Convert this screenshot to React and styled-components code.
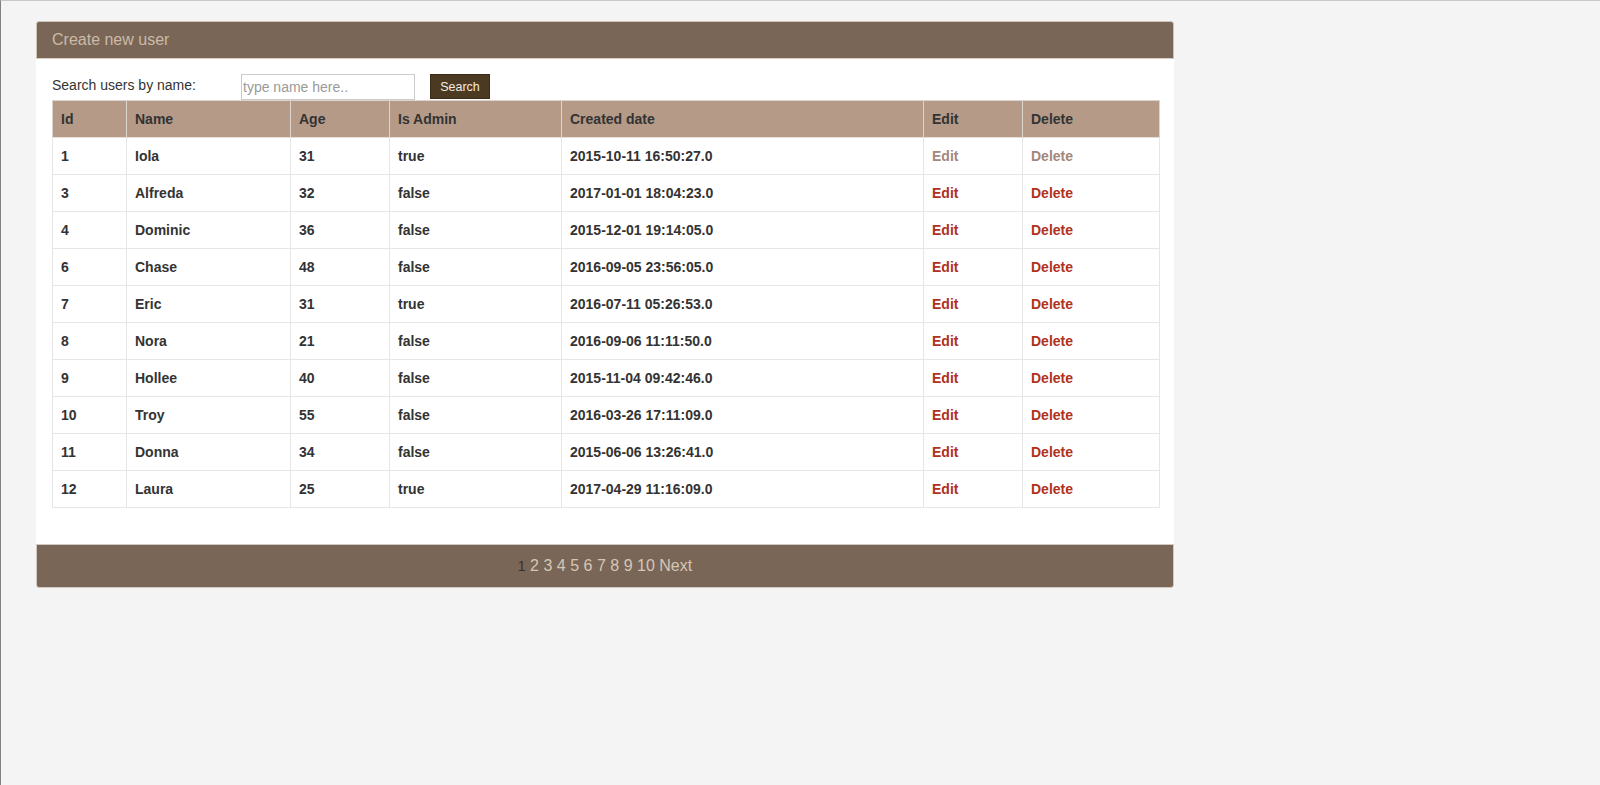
import React from "react";
import styled, { createGlobalStyle } from "styled-components";

const GlobalStyle = createGlobalStyle`
  html, body {
    margin: 0;
    padding: 0;
    background: #f4f4f4;
  }
  body {
    font-family: "Liberation Sans", Arial, sans-serif;
    font-size: 14px;
    color: #333;
  }
`;

const Page = styled.div`
  box-sizing: border-box;
  min-height: 785px;
  border-top: 1px solid #c9c9c9;
  border-left: 1px solid #808080;
  padding: 20px 0 0 35px;
`;

const Panel = styled.div`
  width: 1138px;
  background: #fff;
`;

const PanelHeader = styled.div`
  box-sizing: border-box;
  height: 38px;
  padding: 0 15px;
  display: flex;
  align-items: center;
  background: #7a6656;
  border: 1px solid #cfc4ba;
  border-bottom-color: #d6ccc2;
  border-radius: 3px 3px 0 0;
  color: #cbbba8;
  font-size: 16px;
`;

const PanelBody = styled.div`
  padding: 15px 15px 36px 16px;
`;

const SearchRow = styled.div`
  display: flex;
  align-items: flex-start;
`;

const SearchLabel = styled.label`
  width: 189px;
  padding-top: 1px;
  line-height: 20px;
  font-size: 14px;
  color: #333;
`;

const SearchInput = styled.input`
  box-sizing: border-box;
  width: 174px;
  height: 26px;
  margin: 0;
  padding: 0 1px;
  border: 1px solid #cccccc;
  font-family: "Liberation Sans", Arial, sans-serif;
  font-size: 14px;
  color: #333;
  outline: none;

  &::placeholder {
    color: #9a9a9a;
  }
`;

const SearchButton = styled.button`
  box-sizing: border-box;
  width: 60px;
  height: 25px;
  margin-left: 15px;
  padding: 0;
  background: #4c3921;
  border: 1px solid #3a2b17;
  color: #f3ece3;
  font-family: "Liberation Sans", Arial, sans-serif;
  font-size: 12.5px;
  cursor: pointer;
`;

const Table = styled.table`
  width: 1107px;
  table-layout: fixed;
  border-collapse: collapse;
  border: 1px solid #e3e3e3;
`;

const HeadCell = styled.th`
  padding: 8px;
  line-height: 20px;
  text-align: left;
  font-size: 14px;
  font-weight: bold;
  color: #333;
  background: #b49a87;
  border: 1px solid #dcd4cd;
  border-bottom: 1px solid #e6e0da;
`;

const Cell = styled.td`
  padding: 8px;
  line-height: 20px;
  font-size: 14px;
  font-weight: bold;
  color: #333;
  border: 1px solid #e6e6e6;
`;

const ActionLink = styled.a`
  color: ${(p) => (p.$muted ? "#a3877b" : "#b0311c")};
  text-decoration: none;
  cursor: pointer;
`;

const PanelFooter = styled.div`
  box-sizing: border-box;
  height: 44px;
  padding-top: 10px;
  background: #7a6656;
  border: 1px solid #d3c9c0;
  border-radius: 0 0 3px 3px;
  text-align: center;
  line-height: 22px;
  font-size: 16px;
`;

const PageLink = styled.a`
  color: ${(p) => (p.$current ? "#3b3129" : "#d4c6b6")};
  font-size: ${(p) => (p.$current ? "14px" : "16px")};
  text-decoration: none;
  cursor: pointer;
`;

const columns = [
  { label: "Id", width: 74 },
  { label: "Name", width: 164 },
  { label: "Age", width: 99 },
  { label: "Is Admin", width: 172 },
  { label: "Created date", width: 362 },
  { label: "Edit", width: 99 },
  { label: "Delete", width: 137 },
];

const users = [
  [1, "Iola", 31, "true", "2015-10-11 16:50:27.0"],
  [3, "Alfreda", 32, "false", "2017-01-01 18:04:23.0"],
  [4, "Dominic", 36, "false", "2015-12-01 19:14:05.0"],
  [6, "Chase", 48, "false", "2016-09-05 23:56:05.0"],
  [7, "Eric", 31, "true", "2016-07-11 05:26:53.0"],
  [8, "Nora", 21, "false", "2016-09-06 11:11:50.0"],
  [9, "Hollee", 40, "false", "2015-11-04 09:42:46.0"],
  [10, "Troy", 55, "false", "2016-03-26 17:11:09.0"],
  [11, "Donna", 34, "false", "2015-06-06 13:26:41.0"],
  [12, "Laura", 25, "true", "2017-04-29 11:16:09.0"],
];

const pages = [1, 2, 3, 4, 5, 6, 7, 8, 9, 10];

export default function App() {
  return (
    <>
      <GlobalStyle />
      <Page>
        <Panel>
          <PanelHeader>Create new user</PanelHeader>
          <PanelBody>
            <SearchRow>
              <SearchLabel>Search users by name:</SearchLabel>
              <SearchInput placeholder="type name here.." />
              <SearchButton>Search</SearchButton>
            </SearchRow>
            <Table>
              <colgroup>
                {columns.map((c) => (
                  <col key={c.label} style={{ width: c.width }} />
                ))}
              </colgroup>
              <thead>
                <tr>
                  {columns.map((c) => (
                    <HeadCell key={c.label}>{c.label}</HeadCell>
                  ))}
                </tr>
              </thead>
              <tbody>
                {users.map(([id, name, age, admin, created], i) => (
                  <tr key={id}>
                    <Cell>{id}</Cell>
                    <Cell>{name}</Cell>
                    <Cell>{age}</Cell>
                    <Cell>{admin}</Cell>
                    <Cell>{created}</Cell>
                    <Cell>
                      <ActionLink $muted={i === 0}>Edit</ActionLink>
                    </Cell>
                    <Cell>
                      <ActionLink $muted={i === 0}>Delete</ActionLink>
                    </Cell>
                  </tr>
                ))}
              </tbody>
            </Table>
          </PanelBody>
          <PanelFooter>
            {pages.map((n) => (
              <React.Fragment key={n}>
                <PageLink $current={n === 1}>{n}</PageLink>{" "}
              </React.Fragment>
            ))}
            <PageLink>Next</PageLink>
          </PanelFooter>
        </Panel>
      </Page>
    </>
  );
}
